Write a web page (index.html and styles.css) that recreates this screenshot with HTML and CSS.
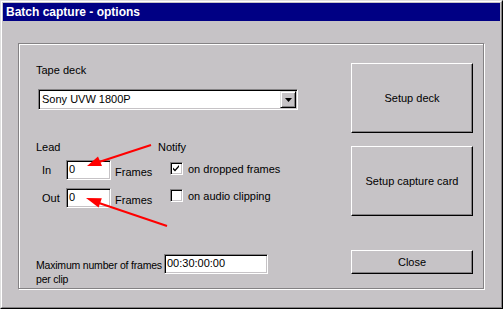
FILE: index.html
```html
<!DOCTYPE html>
<html lang="en">
<head>
    <meta charset="UTF-8">
    <title>Batch capture - options</title>
    <link rel="stylesheet" href="styles.css">
</head>
<body>
    <div class="window">
        <div class="frame">
            <div class="titlebar">Batch capture - options</div>
            <div class="client">
                <div class="group">
                    <div class="left">
                        <div class="label tape-label">Tape deck</div>
                        <div class="combo">
                            <span class="combo-text">Sony UVW 1800P</span>
                            <span class="combo-btn">
                                <svg width="7" height="4" viewBox="0 0 7 4"><path d="M0 0h7L3.5 4z" fill="#000"/></svg>
                            </span>
                        </div>

                        <div class="lead-notify">
                            <div class="lead">
                                <div class="label">Lead</div>
                                <div class="lead-row first">
                                    <span class="row-label">In</span>
                                    <span class="textbox frames-box">0</span>
                                    <span class="unit">Frames</span>
                                </div>
                                <div class="lead-row">
                                    <span class="row-label">Out</span>
                                    <span class="textbox frames-box">0</span>
                                    <span class="unit">Frames</span>
                                </div>
                            </div>
                            <div class="notify">
                                <div class="label">Notify</div>
                                <div class="check-row first">
                                    <span class="checkbox">
                                        <svg width="9" height="9" viewBox="0 0 9 9"><path d="M1 3.5l2 2 4-4.5v2l-4 4.5-2-2z" fill="#000"/></svg>
                                    </span>
                                    <span>on dropped frames</span>
                                </div>
                                <div class="check-row">
                                    <span class="checkbox"></span>
                                    <span>on audio clipping</span>
                                </div>
                            </div>
                        </div>

                        <div class="max-row">
                            <div class="max-label">Maximum number of frames<br>per clip</div>
                            <span class="textbox max-box">00:30:00:00</span>
                        </div>
                    </div>

                    <div class="buttons">
                        <div class="button big">Setup deck</div>
                        <div class="button big">Setup capture card</div>
                        <div class="button close">Close</div>
                    </div>
                </div>
            </div>
        </div>

        <!-- red callout arrows drawn over the dialog -->
        <svg class="arrows" width="503" height="309" viewBox="0 0 503 309">
            <line x1="151" y1="145" x2="99" y2="162" stroke="#f00" stroke-width="2"/>
            <polygon points="87,166 102,166 98,156.5" fill="#f00"/>
            <line x1="167" y1="226" x2="99" y2="203" stroke="#f00" stroke-width="2"/>
            <polygon points="86,198 101.8,198.2 98.6,207.6" fill="#f00"/>
        </svg>
    </div>
</body>
</html>
```

FILE: styles.css
```css
body {
    margin: 0;
    padding: 0;
    font-family: 'Liberation Sans', Arial, sans-serif;
    font-size: 11px;
    color: #000;
    background: #c6c3c6;
}

.window {
    position: relative;
    width: 503px;
    height: 309px;
    box-sizing: border-box;
    border: 1px solid;
    border-color: #dfdfdf #000 #000 #dfdfdf;
    background: #c6c3c6;
}

.frame {
    height: 100%;
    box-sizing: border-box;
    border: 1px solid;
    border-color: #fff #848284 #848284 #fff;
    padding: 1px;
    display: flex;
    flex-direction: column;
}

.titlebar {
    height: 18px;
    line-height: 18px;
    background: #000084;
    color: #fff;
    font-weight: bold;
    font-size: 12px;
    padding-left: 3px;
}

.client {
    flex: 1;
    padding-top: 22px;
}

.group {
    margin-left: 15px;
    width: 466px;
    height: 246px;
    box-sizing: border-box;
    border: 1px solid #848284;
    box-shadow: inset 1px 1px #fff, 1px 1px #fff;
    padding: 0 10px 0 17px;
    display: grid;
    grid-template-columns: 315px 122px;
}

.label {
    line-height: 13px;
    height: 13px;
    white-space: nowrap;
}

.tape-label {
    margin-top: 20px;
}

/* sunken edit / combo fields */
.combo,
.textbox,
.checkbox {
    box-sizing: border-box;
    background: #fff;
    border: 1px solid;
    border-color: #848284 #fff #fff #848284;
    box-shadow: inset 1px 1px #000, inset -1px -1px #c6c3c6;
}

.combo {
    margin: 12px 0 0 2px;
    width: 260px;
    height: 21px;
    padding: 1px;
    display: flex;
    align-items: center;
}

.combo-text {
    flex: 1;
    padding-left: 2px;
    line-height: 17px;
}

.combo-btn {
    width: 16px;
    height: 17px;
    box-sizing: border-box;
    background: #c6c3c6;
    border: 1px solid;
    border-color: #dfdfdf #000 #000 #dfdfdf;
    box-shadow: inset 1px 1px #fff, inset -1px -1px #848284;
    display: flex;
    align-items: center;
    justify-content: center;
}

.lead-notify {
    margin-top: 31px;
    display: grid;
    grid-template-columns: 122px 1fr;
}

.lead-row {
    display: flex;
    align-items: center;
    height: 20px;
    margin-top: 8px;
}

.lead-row.first {
    margin-top: 6px;
}

.row-label {
    width: 24px;
    padding-left: 6px;
}

.textbox {
    height: 20px;
    padding: 0 2px;
    line-height: 17px;
    white-space: nowrap;
}

.frames-box {
    width: 45px;
}

.unit {
    margin-left: 4px;
    padding-top: 3px;
}

.check-row {
    display: flex;
    align-items: center;
    height: 13px;
    margin-top: 14px;
    padding-left: 12px;
    white-space: nowrap;
}

.check-row.first {
    margin-top: 8px;
}

.checkbox {
    width: 13px;
    height: 13px;
    margin-right: 5px;
    display: flex;
    align-items: center;
    justify-content: center;
}

.max-row {
    margin-top: 46px;
    display: flex;
    align-items: flex-start;
}

.max-label {
    width: 128px;
    margin-top: 4px;
    line-height: 14px;
    font-size: 10.5px;
    letter-spacing: -0.2px;
    white-space: nowrap;
}

.max-box {
    width: 104px;
}

.buttons {
    display: flex;
    flex-direction: column;
    padding-top: 19px;
}

.button {
    box-sizing: border-box;
    border: 1px solid;
    border-color: #fff #000 #000 #fff;
    box-shadow: inset -1px -1px #848284;
    display: flex;
    align-items: center;
    justify-content: center;
    white-space: nowrap;
}

.button.big {
    height: 70px;
    margin-bottom: 13px;
}

.button.close {
    height: 24px;
    margin-top: 21px;
}

.arrows {
    position: absolute;
    top: -1px;
    left: -1px;
    pointer-events: none;
}
```
